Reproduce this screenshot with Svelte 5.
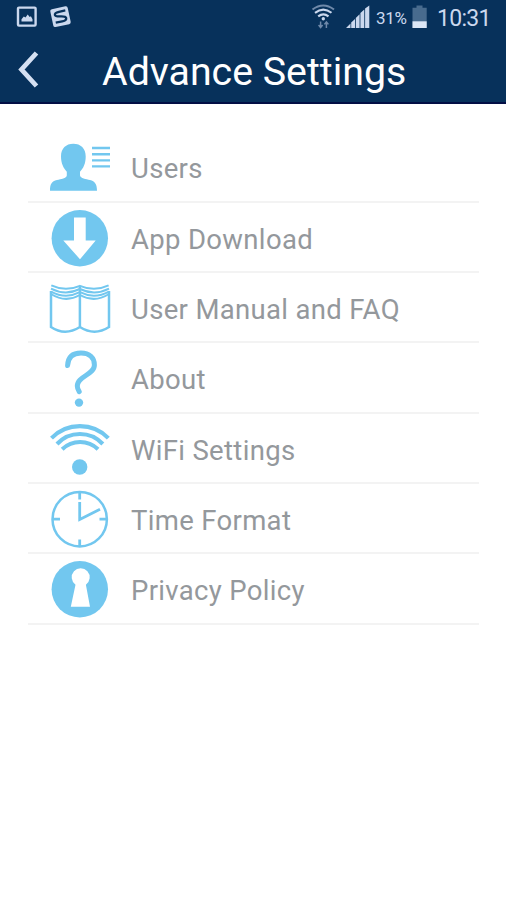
<script>
  const items = [
    { icon: 'users', label: 'Users' },
    { icon: 'download', label: 'App Download' },
    { icon: 'manual', label: 'User Manual and FAQ' },
    { icon: 'about', label: 'About' },
    { icon: 'wifi', label: 'WiFi Settings' },
    { icon: 'clock', label: 'Time Format' },
    { icon: 'privacy', label: 'Privacy Policy' }
  ];
</script>

<div class="screen">
  <header>
    <div class="status">
      <svg class="notifications" width="80" height="34" viewBox="0 0 80 34">
        <rect x="18" y="7.6" width="17.6" height="18" rx="1" fill="none" stroke="#cbd8ee" stroke-width="2.4" />
        <path d="M21.5 21.5v-2.2l2.3-2.8 1.7 1 2.2-3 2 2.5 1.2-.8 1.6 3v2.3z" fill="#cbd8ee" />
        <g transform="rotate(-12 60.5 16.7)">
          <rect x="51.6" y="7.6" width="17.8" height="18.2" rx="2" fill="#cbd8ee" />
          <path d="M66.5 11.6h-6.5q-4.6 0-4.6 2.3c0 3.2 10.4 1.8 10.4 5.2q0 2.5-4.6 2.5H54.6" fill="none" stroke="#07315b" stroke-width="2.3" />
        </g>
      </svg>
      <div class="indicators">
        <svg width="60" height="34" viewBox="311 0 60 34">
          <g fill="none" stroke-width="2.1">
            <path d="M312.5 9.5q10.8-8 21.5 0" stroke="#6f89aa" />
            <path d="M315 12.8q8.3-6.5 16.5 0" stroke="#cbd8ee" />
            <path d="M318.2 16.3q5.2-4 10.3 0" stroke="#cbd8ee" />
          </g>
          <circle cx="323.3" cy="18.8" r="1.7" fill="#cbd8ee" />
          <path d="M320.6 21.5v6M318.6 25l2 2.5 2-2.5M326.4 28v-6M324.4 24.4l2-2.5 2 2.5" fill="none" stroke="#6f89aa" stroke-width="1.5" />
          <path d="M346 28l4.5-4.5V28zM351.2 22.6l3.8-3.6v9h-3.8zM355.8 18l3.8-3.7V28H355.8zM360.4 13l3.9-3.5V28h-3.9zM365.1 8.6l4.2-3V28h-4.2z" fill="#cbd8ee" />
        </svg>
        <span class="percent">31%</span>
        <svg class="battery" width="15" height="34" viewBox="412 0 15 34">
          <path d="M412.5 7.8h4V5.4h6v2.4h4.2V28h-14.2z" fill="#486b8e" />
          <path d="M412.5 21.3h14.2V28h-14.2z" fill="#dce6f5" />
        </svg>
        <time>10:31</time>
      </div>
    </div>
    <div class="bar">
      <svg class="back" width="50" height="70" viewBox="0 34 50 70">
        <path d="M36.5 53L21.5 69.5L36.5 86" fill="none" stroke="#d5e0f2" stroke-width="4.8" />
      </svg>
      <h1>Advance Settings</h1>
    </div>
  </header>

  <ul>
    {#each items as item}
      <li>
        <svg class="icon" width="90" height="68" viewBox="0 0 90 68">
          {#if item.icon === 'users'}
            <path class="solid" d="M33.3 11.8C26 11.8 21 16.5 21 24.5C21 31.5 23.5 36 26.8 39.8V43.5C26.5 46.5 21 47 17 48C11.5 49.5 10 52 10 58.7H57C57 52 55 49.5 50 48C46 47 40.5 46.5 40 43.5V39.8C43.5 36 45.7 31.5 45.7 24.5C45.7 16.5 40.8 11.8 33.3 11.8Z" />
            <path class="line" stroke-width="2.4" d="M52 16H70M52 22.3H70M52 28.4H70M52 34.4H70" />
          {:else if item.icon === 'download'}
            <circle class="solid" cx="39.8" cy="35.2" r="28.2" />
            <path fill="#fff" d="M34 14.6H45.7V37.4H55.7L40 56.3L23.3 37.4H34Z" />
          {:else if item.icon === 'manual'}
            <path class="line" stroke-width="2.5" d="M11 18V54Q25 63.4 39.9 54Q54.5 63.4 69 54V18M39.9 14V54" />
            <path class="line" stroke-width="2" d="M11.3 12.4Q25.5 19 39.9 12.8Q54.5 19 68.6 12.4M11 15.6Q25.5 23 39.9 16Q54.5 23 69 15.6M11 18.6Q25.5 26.5 39.9 19.2Q54.5 26.5 69 18.6M11 21Q25.5 30.2 39.9 22Q54.5 30.2 69 21" />
          {:else if item.icon === 'about'}
            <path class="line" stroke-width="5" stroke-linecap="round" d="M27.6 22.5C28 14 33 10 41 10C49.5 10 54.4 15 54.4 22C54.4 32 37.3 33 37.3 43C37.3 45.5 38 46.7 39.2 48.6" />
            <circle class="solid" cx="39" cy="59.6" r="4.2" />
          {:else if item.icon === 'wifi'}
            <path class="line" stroke-width="4.1" d="M11.5 24.1A39.6 39.6 0 0 1 68.3 24.1M17 30A31.2 31.2 0 0 1 62.8 30M22.2 35.2A25.8 25.8 0 0 1 58 35.2" />
            <circle class="solid" cx="39.7" cy="53" r="7.7" />
          {:else if item.icon === 'clock'}
            <circle class="line" stroke-width="2.5" cx="39.7" cy="35.2" r="27.2" />
            <path class="line" stroke-width="2.8" d="M39.7 8V15.5M39.7 55.5V62M12.5 35.2H20M59.5 35.2H67M39.7 18V35.5L60 25.3" />
          {:else}
            <circle class="solid" cx="39.8" cy="35.3" r="28.2" />
            <path fill="#fff" d="M35.5 30.7A9 9 0 1 1 45.9 30.7L50 52.8H30.8Z" />
          {/if}
        </svg>
        <span>{item.label}</span>
      </li>
    {/each}
  </ul>
</div>

<style>
  :global(body) {
    margin: 0;
    background: #fff;
  }
  .screen {
    width: 506px;
    height: 900px;
    overflow: hidden;
    background: #fff;
    font-family: Roboto, "Liberation Sans", sans-serif;
  }
  header {
    box-sizing: border-box;
    height: 104px;
    background: #07315b;
    border-bottom: 2px solid #030f45;
  }
  .status {
    display: flex;
    justify-content: space-between;
    height: 34px;
    color: #cbd8ee;
  }
  .indicators {
    display: flex;
    width: 195px;
  }
  svg {
    display: block;
    flex: none;
  }
  .percent {
    width: 35px;
    margin-left: 5px;
    font-size: 17px;
    line-height: 36px;
    letter-spacing: -0.3px;
  }
  .battery {
    margin-left: 1px;
  }
  time {
    margin-left: 10px;
    font-size: 23px;
    line-height: 37px;
    letter-spacing: -0.7px;
    white-space: nowrap;
  }
  .bar {
    display: flex;
    height: 68px;
  }
  h1 {
    margin: 0 0 0 52px;
    color: #fff;
    font-size: 39.3px;
    font-weight: 400;
    line-height: 76px;
    white-space: nowrap;
  }
  ul {
    margin: 28.4px 27px 0 28px;
    padding: 0;
    list-style: none;
  }
  li {
    display: flex;
    box-sizing: border-box;
    height: 70.33px;
    padding-left: 12px;
    border-bottom: 2px solid #f3f3f3;
  }
  li span {
    margin-left: 1px;
    color: #94989c;
    font-size: 27.5px;
    line-height: 73.6px;
    letter-spacing: 0.33px;
    white-space: nowrap;
  }
  .solid {
    fill: #72c7ef;
  }
  .line {
    fill: none;
    stroke: #72c7ef;
  }
</style>
